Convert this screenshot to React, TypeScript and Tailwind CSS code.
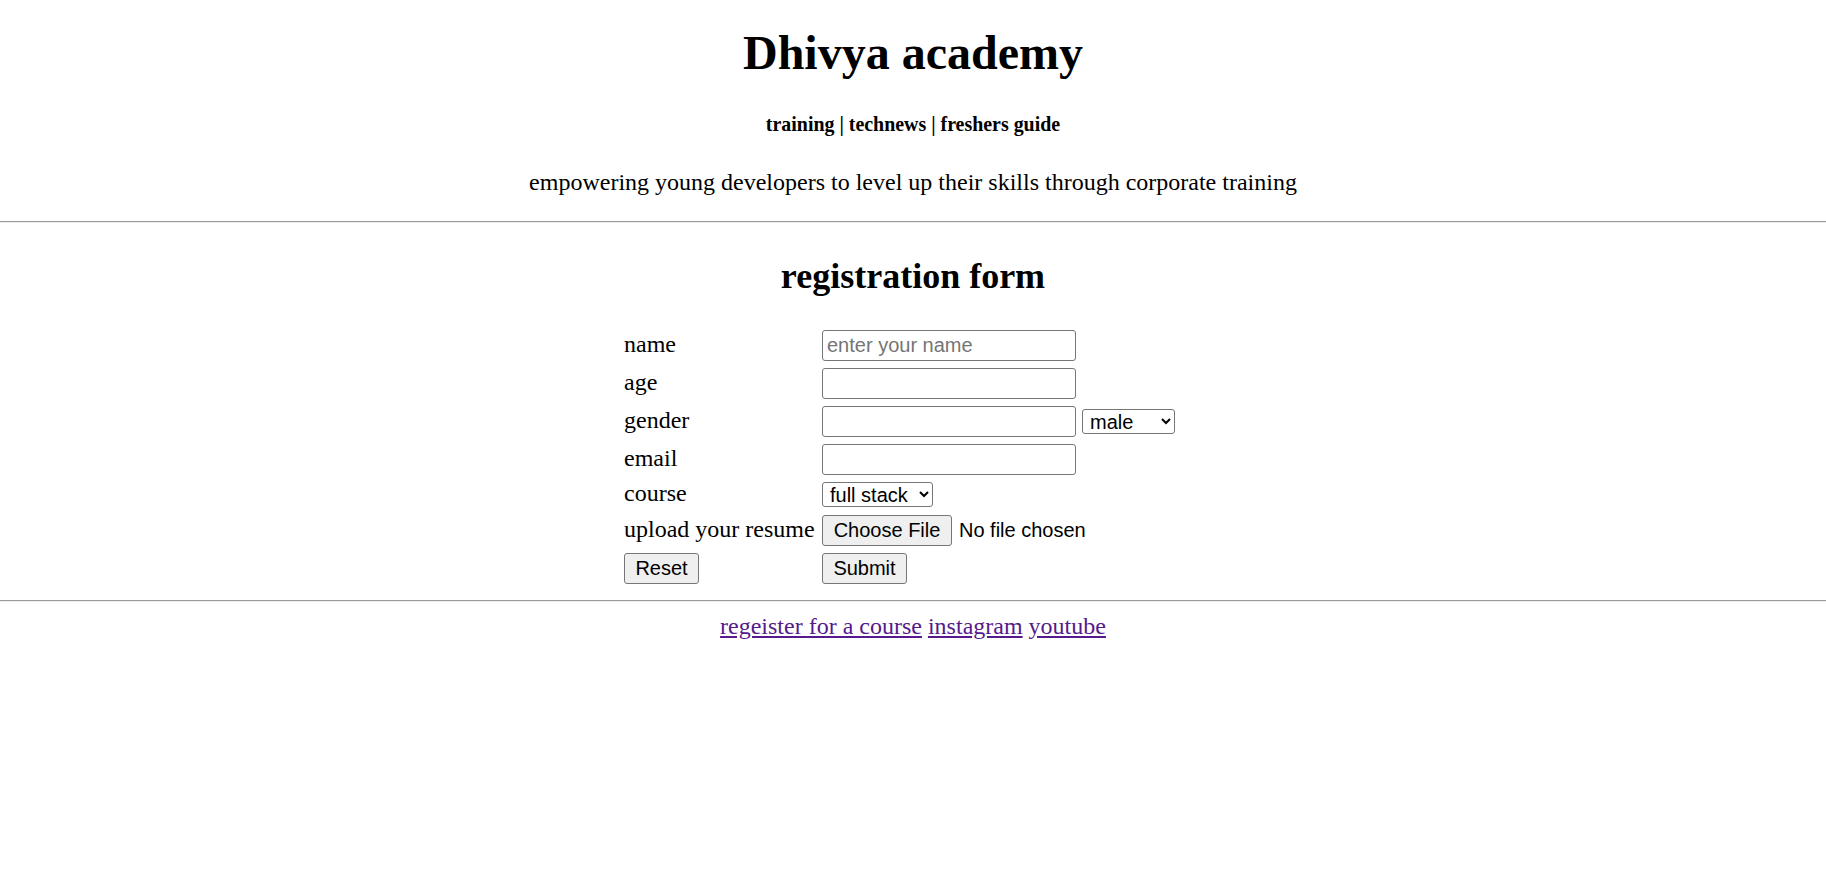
import React from "react"

const serif = { fontFamily: '"Liberation Serif", "Times New Roman", serif' }

function Field({ placeholder }: { placeholder?: string }) {
  return (
    <input
      type="text"
      placeholder={placeholder}
      className="h-[31px] w-[254px] rounded-[3px] border border-[#767676] bg-white px-[4px] font-['Liberation_Sans',Arial,sans-serif] text-[20px] text-black placeholder:text-[#757575]"
    />
  )
}

function Btn({ label, width }: { label: string; width: string }) {
  return (
    <button
      type="button"
      className={`h-[31px] ${width} rounded-[3px] border border-[#767676] bg-[#efefef] font-['Liberation_Sans',Arial,sans-serif] text-[20px] leading-[23px] text-black`}
    >
      {label}
    </button>
  )
}

function Label({ children }: { children: React.ReactNode }) {
  return <span className="pb-[3px] text-[24px] leading-[28px] text-black">{children}</span>
}

export default function App() {
  return (
    <div className="min-h-[874px] w-full bg-white text-black" style={serif}>
      {/* header */}
      <h1 className="mt-[25px] text-center text-[48px] font-bold leading-[55px]">Dhivya academy</h1>
      <h5 className="mt-[33px] text-center text-[19.92px] font-bold leading-[23px]">
        training | technews | freshers guide
      </h5>
      <p className="mt-[32px] text-center text-[24px] leading-[28px]">
        empowering young developers to level up their skills through corporate training
      </p>
      <div className="mt-[25px] border-t border-b border-t-[#9a9a9a] border-b-[#eeeeee]" />

      {/* form */}
      <h2 className="mt-[33px] text-center text-[36px] font-bold leading-[41px]">registration form</h2>
      <form className="mx-auto mt-[32px] grid w-[578px] grid-cols-[198px_1fr] gap-y-[6px]">
        <div className="flex h-[32px] items-center"><Label>name</Label></div>
        <div className="flex h-[32px] items-center"><Field placeholder="enter your name" /></div>

        <div className="flex h-[32px] items-center"><Label>age</Label></div>
        <div className="flex h-[32px] items-center"><Field /></div>

        <div className="flex h-[32px] items-center"><Label>gender</Label></div>
        <div className="flex h-[32px] items-center gap-[6px]">
          <Field />
          <select className="h-[25px] w-[93px] rounded-[3px] border border-[#767676] bg-white pl-[3px] font-['Liberation_Sans',Arial,sans-serif] text-[20px] text-black">
            <option>male</option>
            <option>female</option>
            <option>others</option>
          </select>
        </div>

        <div className="flex h-[32px] items-center"><Label>email</Label></div>
        <div className="flex h-[32px] items-center"><Field /></div>

        <div className="flex h-[27px] items-center"><Label>course</Label></div>
        <div className="flex h-[27px] items-center">
          <select className="h-[25px] w-[111px] rounded-[3px] border border-[#767676] bg-white pl-[3px] font-['Liberation_Sans',Arial,sans-serif] text-[20px] text-black">
            <option>full stack</option>
            <option>frontend</option>
            <option>backend</option>
          </select>
        </div>

        <div className="flex h-[32px] items-center whitespace-nowrap"><Label>upload your resume</Label></div>
        <div className="flex h-[32px] items-center gap-[7px] font-['Liberation_Sans',Arial,sans-serif] text-[20px]">
          <Btn label="Choose File" width="w-[130px]" />
          <span>No file chosen</span>
        </div>

        <div className="flex h-[32px] items-center"><Btn label="Reset" width="w-[75px]" /></div>
        <div className="flex h-[32px] items-center"><Btn label="Submit" width="w-[85px]" /></div>
      </form>

      <div className="mt-[16px] border-t border-b border-t-[#9a9a9a] border-b-[#eeeeee]" />

      {/* footer links */}
      <p className="mt-[10px] text-center text-[24px] leading-[28px]">
        <a href="#" className="text-[#551a8b] underline">regeister for a course</a>{" "}
        <a href="#" className="text-[#551a8b] underline">instagram</a>{" "}
        <a href="#" className="text-[#551a8b] underline">youtube</a>
      </p>
    </div>
  )
}
